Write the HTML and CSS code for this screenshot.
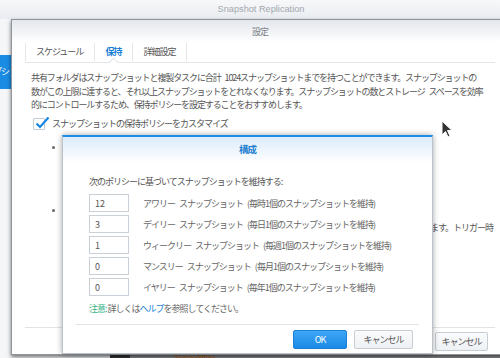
FILE: index.html
```html
<!DOCTYPE html>
<html>
<head>
    <title>Snapshot Replication</title>
    <link rel="stylesheet" href="styles.css">
</head>
<body>
    <div class="app">
        <div class="app-title">Snapshot Replication</div>
        <div class="app-body">
            <div class="sidebar">
                <div class="side-item"></div>
                <div class="side-item active">スナップショット</div>
                <div class="side-item"></div>
                <div class="side-item"></div>
            </div>
            <div class="app-main">
                <div class="app-row"><span class="tag"></span><span class="warn">状態の確認</span></div>
            </div>
        </div>
    </div>

    <div class="window settings">
        <div class="win-head">設定</div>
        <div class="win-body">
            <div class="tabs">
                <div class="tab">スケジュール</div>
                <div class="tab active">保持</div>
                <div class="tab">詳細設定</div>
            </div>
            <p class="desc">共有フォルダはスナップショットと複製タスクに合計 1024スナップショットまでを持つことができます。スナップショットの<br>数がこの上限に達すると、それ以上スナップショットをとれなくなります。スナップショットの数とストレージ スペースを効率<br>的にコントロールするため、保持ポリシーを設定することをおすすめします。</p>
            <label class="check-row">
                <span class="checkbox">
                    <svg width="16" height="16" viewBox="0 0 16 16"><path d="M2.5 8.5 L6 12 L14.5 2.5" fill="none" stroke="#1a87e4" stroke-width="2.2"/></svg>
                </span>
                スナップショットの保持ポリシーをカスタマイズ
            </label>
            <ul class="rules">
                <li>
                    <div>次の条件でスナップショットを保持</div>
                    <div>保持するスナップショット数</div>
                    <div>保持期間</div>
                </li>
                <li>
                    <div>最新のスナップショット</div>
                    <div>保持ポリシーの条件を満たさない古いスナップショットは、すべてシステムによって自動的に削除されます。トリガー時</div>
                    <div>に作成されたスナップショットも含まれます。</div>
                </li>
            </ul>
            <div class="win-foot">
                <button class="btn">キャンセル</button>
            </div>
        </div>
    </div>

    <div class="window modal">
        <div class="modal-head">構成</div>
        <div class="modal-body">
            <div class="intro">次のポリシーに基づいてスナップショットを維持する:</div>
            <div class="keep-list">
                <div class="keep-row"><input class="num" value="12"><span>アワリー スナップショット (毎時1個のスナップショットを維持)</span></div>
                <div class="keep-row"><input class="num" value="3"><span>デイリー スナップショット (毎日1個のスナップショットを維持)</span></div>
                <div class="keep-row"><input class="num" value="1"><span>ウィークリー スナップショット (毎週1個のスナップショットを維持)</span></div>
                <div class="keep-row"><input class="num" value="0"><span>マンスリー スナップショット (毎月1個のスナップショットを維持)</span></div>
                <div class="keep-row"><input class="num" value="0"><span>イヤリー スナップショット (毎年1個のスナップショットを維持)</span></div>
            </div>
            <div class="note"><span class="note-label">注意:</span> 詳しくは<a href="#">ヘルプ</a>を参照してください。</div>
        </div>
        <div class="modal-foot">
            <button class="btn primary">OK</button>
            <button class="btn">キャンセル</button>
        </div>
    </div>

    <svg class="cursor" width="12" height="19" viewBox="0 0 12 19">
        <path d="M1 1 L1 15 L4.5 11.5 L7 17 L9 16 L6.5 10.5 L11 10.5 Z" fill="#333" stroke="#fff" stroke-width="1"/>
    </svg>
</body>
</html>
```

FILE: styles.css
```css
body {
    margin: 0;
    width: 500px;
    height: 358px;
    overflow: hidden;
    position: relative;
    background: #fff;
    font-family: "Noto Sans CJK JP", "Liberation Sans", sans-serif;
    font-size: 9px;
    letter-spacing: -1px;
    word-spacing: 3px;
    color: #555;
}

.app {
    margin-left: -60px;
    width: 642px;
}

.app-title {
    height: 19px;
    line-height: 19px;
    text-align: center;
    font-family: "Liberation Sans", sans-serif;
    font-size: 9.2px;
    letter-spacing: 0;
    word-spacing: 0;
    color: #a3a8ae;
    background: linear-gradient(#f7f8fa, #e9ecf0);
}

.app-body {
    display: flex;
    height: 339px;
}

.sidebar {
    width: 170px;
    padding-top: 2px;
    background: #f5f6f8;
}

.side-item {
    height: 34px;
    line-height: 34px;
    padding-left: 29px;
    color: #444;
}

.side-item.active {
    background: #1b8ce3;
    color: #fff;
}

.app-main {
    flex: 1;
    display: flex;
    flex-direction: column;
    justify-content: flex-end;
    background: #8d8f92;
}

.app-row {
    display: flex;
    align-items: center;
    gap: 44px;
    height: 8px;
}

.tag {
    width: 20px;
    height: 8px;
    background: #3a3a3a;
}

.warn {
    color: #b8661a;
}

/* windows */
.window {
    position: absolute;
    background: #fff;
    box-sizing: border-box;
}

.settings {
    left: 11px;
    top: 19px;
    width: 498px;
    height: 336px;
    border: 1px solid #8f959c;
    box-shadow: 0 2px 4px rgba(0, 0, 0, 0.55);
    display: flex;
    flex-direction: column;
}

.win-head {
    height: 22px;
    line-height: 23px;
    text-align: center;
    color: #7a7f85;
    background: linear-gradient(#e3e7ec, #f6f7f9 70%, #fff);
}

.win-body {
    flex: 1;
    display: flex;
    flex-direction: column;
    padding: 0 13px;
}

.tabs {
    display: flex;
    height: 20px;
    border-bottom: 1px solid #e3e5e8;
}

.tab {
    position: relative;
    height: 18px;
    margin-top: 1px;
    line-height: 18px;
    padding: 0 11px 0 10px;
    border-right: 1px solid #e3e5e8;
    color: #555;
}

.tab:first-child {
    border-left: 1px solid #e3e5e8;
}

.tab.active {
    color: #1a7fd4;
    font-weight: bold;
}

.tab.active::after {
    content: "";
    position: absolute;
    left: 50%;
    bottom: -5px;
    width: 6px;
    height: 6px;
    margin-left: -4px;
    background: #fff;
    border-left: 1px solid #e3e5e8;
    border-top: 1px solid #e3e5e8;
    transform: rotate(45deg);
}

.desc {
    margin: 8px 0 0;
    padding-left: 6px;
    line-height: 13.5px;
    letter-spacing: -1.1px;
    white-space: nowrap;
}

.check-row {
    display: flex;
    align-items: center;
    gap: 7px;
    margin-top: 5px;
    padding-left: 8px;
    height: 14px;
}

.checkbox {
    position: relative;
    width: 10px;
    height: 10px;
    border: 1px solid #c6ccd3;
    border-radius: 1px;
}

.checkbox svg {
    position: absolute;
    left: 0;
    top: -4px;
}

.rules {
    margin: 7px 0 0;
    padding-left: 39px;
    line-height: 18px;
    white-space: nowrap;
}

.rules li {
    margin-bottom: 9px;
}

.rules li::marker {
    font-size: 7px;
    color: #666;
}

.win-foot {
    margin-top: auto;
    border-top: 1px solid #e1e3e6;
    padding: 4px 7px 3px 0;
    display: flex;
    justify-content: flex-end;
}

.btn {
    height: 19px;
    padding: 0;
    font-family: "Noto Sans CJK JP", sans-serif;
    font-size: 9px;
    letter-spacing: -1px;
    color: #555;
    background: linear-gradient(#fafbfc, #eef1f4);
    border: 1px solid #c8cdd3;
    border-radius: 2px;
}

.win-foot .btn {
    width: 53px;
}

/* modal */
.modal {
    left: 62px;
    top: 135px;
    width: 371px;
    height: 219px;
    border: 1px solid #bcc2c9;
    border-top: 2px solid #1d8ce8;
    box-shadow: 0 0 6px rgba(0, 0, 0, 0.35);
}

.modal-head {
    height: 26px;
    line-height: 24px;
    text-align: center;
    font-size: 9.5px;
    font-weight: bold;
    color: #1f7fd0;
    background: linear-gradient(#dcecfa, #fff);
}

.modal-body {
    padding: 12px 26px 0;
}

.intro {
    line-height: 14px;
}

.keep-list {
    display: flex;
    flex-direction: column;
    gap: 3px;
    margin-top: 5px;
}

.keep-row {
    display: flex;
    align-items: center;
    gap: 14px;
    color: #666;
}

.num {
    box-sizing: border-box;
    width: 40px;
    height: 18px;
    padding: 0 5px;
    border: 1px solid #c9d0d8;
    font-family: "Noto Sans CJK JP", sans-serif;
    font-size: 9px;
    color: #555;
}

.note {
    margin-top: 6px;
    line-height: 14px;
    color: #666;
    word-spacing: 0;
}

.note-label {
    color: #3cb58a;
}

.note a {
    color: #1a7fd4;
    text-decoration: none;
}

.modal-foot {
    margin: 8px 13px 0;
    border-top: 1px solid #e1e3e6;
    padding: 5px 6px 4px 0;
    display: flex;
    justify-content: flex-end;
    gap: 7px;
}

.modal-foot .btn {
    width: 59px;
}

.btn.primary {
    width: 54px;
    color: #fff;
    background: linear-gradient(#3ea6f6, #1b8ae5);
    border-color: #1a80d8;
}

.cursor {
    position: absolute;
    left: 441px;
    top: 120px;
}
```
